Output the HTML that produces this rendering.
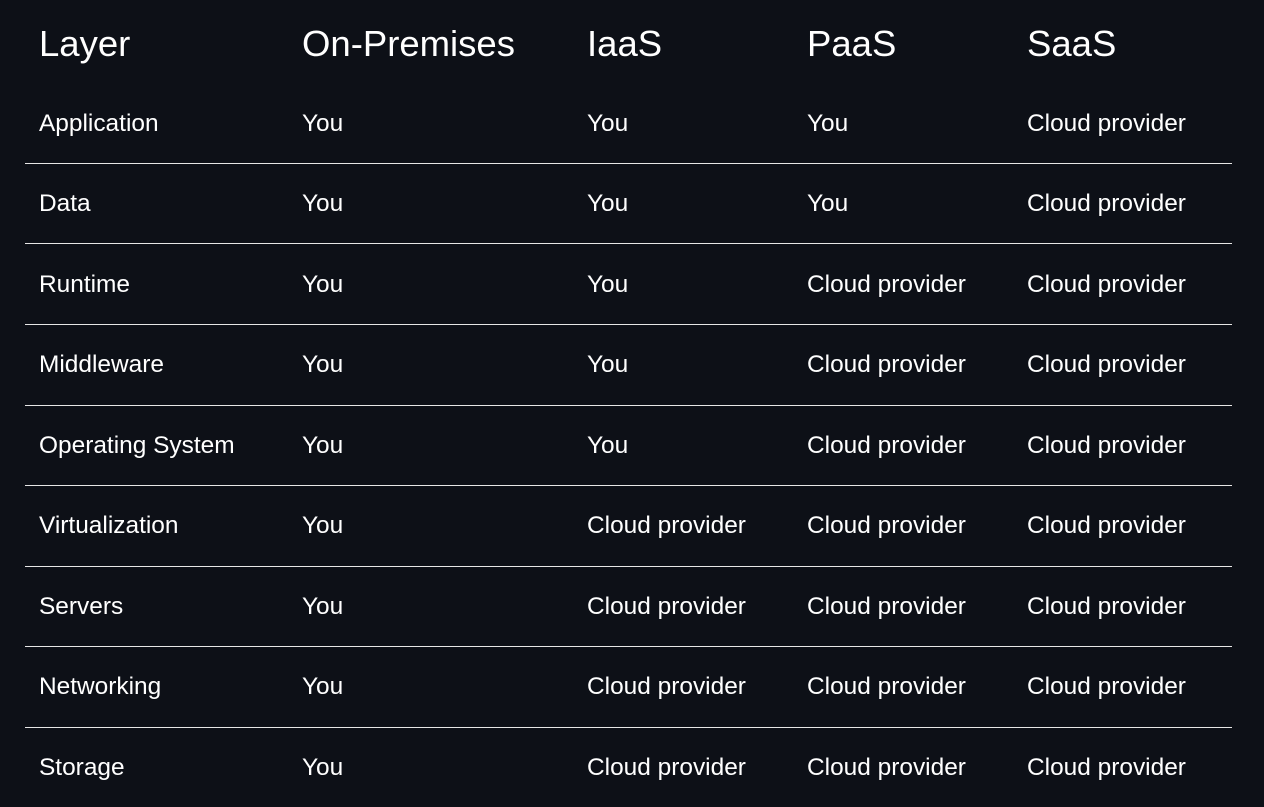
<!DOCTYPE html>
<html><head><meta charset="utf-8"><style>
html,body{margin:0;padding:0;background:#0d1017;width:1264px;height:807px;overflow:hidden;font-family:"Liberation Sans",Arial,sans-serif;color:#fff}
.t{position:absolute;white-space:nowrap;line-height:1}
.h{font-size:36.5px}
.d{font-size:24.45px}
.l{position:absolute;left:25px;width:1207px;height:1px;background:#e6e6e6}
</style></head><body>
<div id="c"></div>
<script>
var cols=[39,302,587,807,1027];
var H=["Layer","On-Premises","IaaS","PaaS","SaaS"];
var R=[["Application","You","You","You","Cloud provider"],["Data","You","You","You","Cloud provider"],["Runtime","You","You","Cloud provider","Cloud provider"],["Middleware","You","You","Cloud provider","Cloud provider"],["Operating System","You","You","Cloud provider","Cloud provider"],["Virtualization","You","Cloud provider","Cloud provider","Cloud provider"],["Servers","You","Cloud provider","Cloud provider","Cloud provider"],["Networking","You","Cloud provider","Cloud provider","Cloud provider"],["Storage","You","Cloud provider","Cloud provider","Cloud provider"]];
var s="";
H.forEach(function(t,i){s+='<div class="t h" style="left:'+cols[i]+'px;top:26px">'+t+'</div>';});
var lines=[163,243,324,405,485,566,646,727];
R.forEach(function(r,j){var y=Math.round(111.5+j*80.5);r.forEach(function(t,i){s+='<div class="t d" style="left:'+cols[i]+'px;top:'+y+'px">'+t+'</div>';});});
lines.forEach(function(y){s+='<div class="l" style="top:'+y+'px"></div>';});
document.getElementById("c").innerHTML=s;
</script>
</body></html>
